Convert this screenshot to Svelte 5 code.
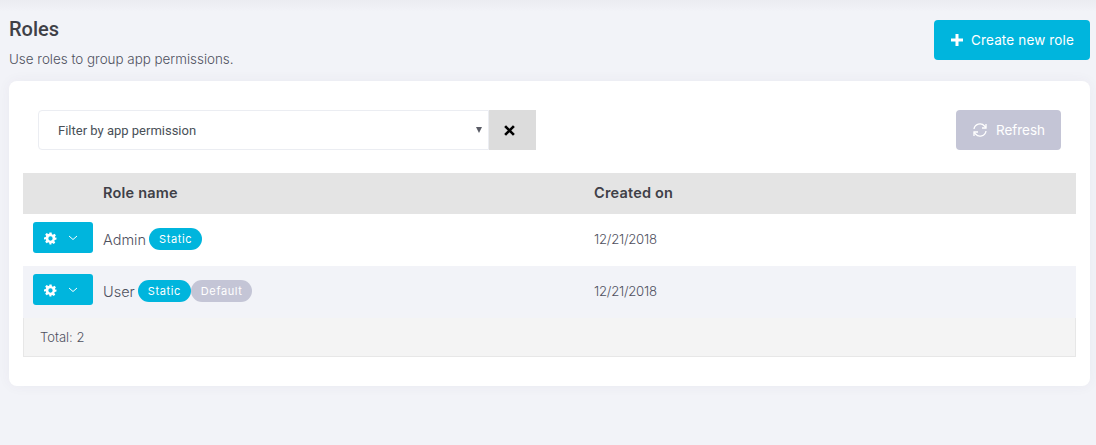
<script>
	const roles = [
		{ name: 'Admin', date: '12/21/2018', tags: ['Static'] },
		{ name: 'User', date: '12/21/2018', tags: ['Static', 'Default'] }
	];
</script>

<div class="page">
	<header class="head">
		<div>
			<h1>Roles</h1>
			<p>Use roles to group app permissions.</p>
		</div>
		<button class="btn create">
			<svg width="14" height="14" viewBox="0 0 14 14"><path d="M7 1v12M1 7h12" stroke="#fff" stroke-width="3" /></svg>
			Create new role
		</button>
	</header>

	<section class="card">
		<div class="filters">
			<div class="filter">
				<div class="select">
					<span>Filter by app permission</span>
					<i class="caret"></i>
				</div>
				<button class="clear" aria-label="Clear">
					<svg width="11" height="11" viewBox="0 0 10 10"><path d="M1 1l8 8M9 1l-8 8" stroke="#000" stroke-width="2.4" /></svg>
				</button>
			</div>
			<button class="btn refresh">
				<svg width="16" height="14" viewBox="0 0 16 14" fill="none" stroke="#fff" stroke-width="1.3">
					<path d="M2 6a6 6 0 0 1 10.5-3L14 4.5" />
					<path d="M14 1v4h-4" />
					<path d="M14 8a6 6 0 0 1-10.5 3L2 9.5" />
					<path d="M2 13V9h4" />
				</svg>
				Refresh
			</button>
		</div>

		<div class="table">
			<div class="row top">
				<div class="actions"></div>
				<div class="name">Role name</div>
				<div>Created on</div>
			</div>
			{#each roles as role, i}
				<div class="row" class:alt={i % 2 === 1}>
					<div class="actions">
						<button class="gear" aria-label="Actions">
							<svg width="13" height="13" viewBox="0 0 24 24" fill="#fff">
								<path fill-rule="evenodd" d="M10 1h4l.6 3.2 1.9.8 2.7-1.8 2.8 2.8-1.8 2.7.8 1.9L23 10v4l-3.2.6-.8 1.9 1.8 2.7-2.8 2.8-2.7-1.8-1.9.8L13.8 23h-3.6l-.6-3.2-1.9-.8-2.7 1.8-2.8-2.8 1.8-2.7-.8-1.9L0 14v-4l3.2-.6.8-1.9L2.2 4.8 5 2l2.7 1.8 1.9-.8L10 1zm2 7a4 4 0 1 0 0 8 4 4 0 0 0 0-8z" />
							</svg>
							<svg width="10" height="6" viewBox="0 0 10 6" fill="none"><path d="M1 1l4 3.5L9 1" stroke="#fff" stroke-width="1" /></svg>
						</button>
					</div>
					<div class="name cell">
						<span>{role.name}</span>
						<span class="tags">
							{#each role.tags as tag}
								<span class="tag" class:muted={tag === 'Default'}>{tag}</span>
							{/each}
						</span>
					</div>
					<div class="cell date">{role.date}</div>
				</div>
			{/each}
			<div class="total">Total: 2</div>
		</div>
	</section>
</div>

<style>
	:global(body) {
		margin: 0;
		background: #f2f3f8;
	}
	.page {
		height: 445px;
		box-sizing: border-box;
		padding: 0 6px 0 9px;
		font-family: Inter, "Noto Sans", sans-serif;
		color: #575962;
		overflow: hidden;
		background: linear-gradient(#ebecf1, #f2f3f8 12px);
	}
	.head {
		display: flex;
		justify-content: space-between;
		height: 81px;
		box-sizing: border-box;
		padding-top: 20px;
	}
	h1 {
		margin: 0;
		font: 500 20px/18px Roboto, sans-serif;
		color: #3f4047;
	}
	.head p {
		margin: 13px 0 0;
		font-size: 13.4px;
		font-weight: 300;
		line-height: 16px;
		color: #4f5160;
	}
	button {
		border: 0;
		padding: 0;
		font-family: inherit;
		cursor: pointer;
	}
	.btn {
		display: flex;
		align-items: center;
		justify-content: center;
		height: 40px;
		border-radius: 4px;
		color: #fff;
		font-size: 13.5px;
		font-weight: 400;
	}
	.create {
		width: 156px;
		gap: 7px;
		background: #00b5dd;
		letter-spacing: 0.15px;
	}
	.card {
		height: 305px;
		box-sizing: border-box;
		background: #fff;
		border-radius: 8px;
		padding: 29px 14px 0;
		box-shadow: 0 0 13px rgba(82, 63, 105, 0.05);
	}
	.filters {
		display: flex;
		justify-content: space-between;
		padding: 0 15px;
		margin-bottom: 23px;
	}
	.filter {
		display: flex;
	}
	.select {
		width: 451px;
		height: 40px;
		box-sizing: border-box;
		display: flex;
		align-items: center;
		justify-content: space-between;
		padding: 0 6px 0 19px;
		border: 1px solid #ebedf2;
		border-radius: 4px 0 0 4px;
		font: 13px Roboto, sans-serif;
		color: #495057;
	}
	.caret {
		width: 0;
		height: 0;
		border: 3.5px solid transparent;
		border-top: 6px solid #5a5c66;
		border-bottom: 0;
	}
	.clear {
		width: 47px;
		height: 40px;
		background: #dcdcdc;
		display: flex;
		align-items: center;
		justify-content: center;
		padding-right: 6px;
	}
	.refresh {
		width: 105px;
		gap: 8px;
		padding-bottom: 1px;
		background: #c4c5d6;
	}
	.table {
		font-size: 14.5px;
	}
	.row {
		display: flex;
		align-items: center;
		height: 52px;
	}
	.row.top {
		height: 41px;
		padding-bottom: 2px;
		box-sizing: border-box;
		background: #e4e4e4;
		font-weight: 600;
		color: #3f4047;
		letter-spacing: 0.2px;
	}
	.row.alt {
		background: #f2f3f8;
	}
	.actions {
		width: 70px;
		padding-left: 10px;
		flex: none;
		align-self: flex-start;
		padding-top: 8px;
	}
	.name {
		width: 491px;
		flex: none;
		display: flex;
		align-items: center;
		gap: 3px;
	}
	.top .actions {
		padding-top: 0;
	}
	.cell {
		color: #4f5160;
		font-weight: 300;
		margin-top: -2px;
	}
	.date {
		font-size: 13.2px;
		letter-spacing: -0.25px;
	}
	.gear {
		width: 60px;
		height: 31px;
		background: #00b5dd;
		border-radius: 3px;
		display: flex;
		align-items: center;
		justify-content: center;
		gap: 11px;
		padding: 1px 4px 0 0;
	}
	.tags {
		display: flex;
	}
	.tag {
		display: block;
		padding: 0 10px;
		height: 22px;
		line-height: 22px;
		border-radius: 11px;
		background: #00b5dd;
		color: #fff;
		font-size: 11px;
		font-weight: 400;
		letter-spacing: 0.6px;
	}
	.tag.muted {
		background: #c4c5d6;
	}
	.total {
		height: 39px;
		box-sizing: border-box;
		display: flex;
		align-items: center;
		padding-left: 16px;
		background: #f4f4f4;
		border: 1px solid #e7e7e7;
		border-top: 0;
		font-size: 13px;
		font-weight: 300;
		color: #4f5160;
	}
</style>
